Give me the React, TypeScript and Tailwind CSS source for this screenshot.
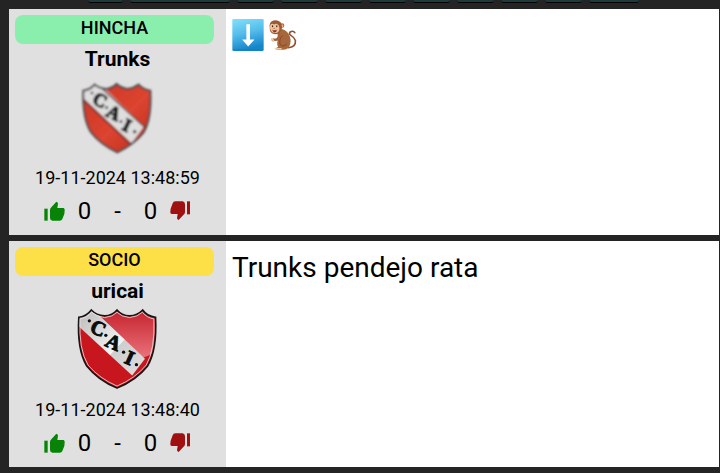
import React from "react";

type Post = {
  id: number;
  rank: string;
  rankClass: string;
  user: string;
  crest: React.ReactNode;
  date: string;
  body: React.ReactNode;
};

function SoftCrest() {
  return (
    <svg viewBox="55 21 240 240" className="h-20 w-20" role="img" aria-label="CAI">
      <defs>
        <linearGradient id="softRed" x1="0" y1="0" x2="1" y2="1">
          <stop offset="0" stopColor="#c93424" />
          <stop offset="0.55" stopColor="#dc4430" />
          <stop offset="1" stopColor="#b8281a" />
        </linearGradient>
        <clipPath id="softClip">
          <path d="M71 62 Q91 60 105 44 Q120 56 143 57 Q160 54 171 42 Q184 54 203 57 Q222 55 237 44 Q250 59 272 62 Q276 150 251 188 Q222 224 173 247 Q124 224 95 188 Q68 146 71 62Z" />
        </clipPath>
        <filter id="soften" x="-10%" y="-10%" width="120%" height="120%">
          <feGaussianBlur stdDeviation="2.5" />
        </filter>
      </defs>
      <g filter="url(#soften)">
        <g clipPath="url(#softClip)">
          <rect x="60" y="35" width="220" height="220" fill="url(#softRed)" />
          <path d="M60 40H118L253 169L216 220L62 76Z" fill="#dedede" />
          <path d="M118 47L255 172M66 84L212 222" stroke="#58302c" strokeWidth="4" fill="none" />
          <g fill="#161616" stroke="#161616" strokeWidth="4" fontFamily="Liberation Serif, serif" fontWeight="700" fontSize="56" textAnchor="middle">
            <text transform="translate(121 91) rotate(26)" y="18">C</text>
            <text transform="translate(162 129) rotate(26)" y="18">A</text>
            <text transform="translate(202 166) rotate(26)" y="18">I</text>
          </g>
          <g fill="#161616">
            <circle cx="97" cy="69" r="4" />
            <circle cx="141" cy="113" r="4" />
            <circle cx="184" cy="155" r="4" />
            <circle cx="225" cy="185" r="5" />
          </g>
        </g>
        <path d="M71 62 Q91 60 105 44 Q120 56 143 57 Q160 54 171 42 Q184 54 203 57 Q222 55 237 44 Q250 59 272 62 Q276 150 251 188 Q222 224 173 247 Q124 224 95 188 Q68 146 71 62Z" fill="none" stroke="#55494a" strokeWidth="6" />
      </g>
    </svg>
  );
}

function GlossCrest() {
  return (
    <svg viewBox="55 27 240 243" className="h-20 w-20 overflow-visible" role="img" aria-label="CAI">
      <defs>
        <linearGradient id="glossShine" x1="0" y1="0" x2="0" y2="1">
          <stop offset="0" stopColor="#c4202a" />
          <stop offset="1" stopColor="#ea727a" />
        </linearGradient>
        <linearGradient id="glossBand" gradientUnits="userSpaceOnUse" x1="60" y1="40" x2="230" y2="200">
          <stop offset="0" stopColor="#bdbdbd" />
          <stop offset="0.65" stopColor="#f4f4f4" />
          <stop offset="0.66" stopColor="#cfcfcf" />
          <stop offset="1" stopColor="#dadada" />
        </linearGradient>
        <clipPath id="glossClip">
          <path d="M56 52 Q80 49 94 30 Q109 46 134 48 Q158 47 172 30 Q186 47 210 48 Q234 47 250 30 Q263 49 289 52 Q294 150 265 200 Q230 244 172 267 Q115 244 80 200 Q50 150 56 52Z" />
        </clipPath>
      </defs>
      <g clipPath="url(#glossClip)">
        <rect x="50" y="25" width="245" height="245" fill="#c8161f" />
        <path d="M100 25H295V150Q275 169 250 175Z" fill="url(#glossShine)" />
        <path d="M50 25H96L257 178L218 229L50 75Z" fill="url(#glossBand)" />
      </g>
      <g fill="#0c0c0c" stroke="#0c0c0c" strokeWidth="3" fontFamily="Liberation Serif, serif" fontWeight="700" fontSize="62" textAnchor="middle">
        <text transform="translate(115 86) rotate(24)" y="20">C</text>
        <text transform="translate(161 129) rotate(24)" y="20">A</text>
        <text transform="translate(210 176) rotate(24)" y="20">I</text>
      </g>
      <g fill="#0c0c0c">
        <circle cx="88" cy="63" r="5" />
        <circle cx="138" cy="107" r="5" />
        <circle cx="192" cy="158" r="5" />
        <circle cx="231" cy="196" r="5" />
      </g>
      <path d="M56 52 Q80 49 94 30 Q109 46 134 48 Q158 47 172 30 Q186 47 210 48 Q234 47 250 30 Q263 49 289 52 Q294 150 265 200 Q230 244 172 267 Q115 244 80 200 Q50 150 56 52Z" fill="none" stroke="#161616" strokeWidth="5" />
      <path d="M60 57 Q82 54 95 37 Q111 51 134 53 Q159 51 172 37 Q186 51 210 53 Q234 51 249 37 Q263 54 284 57 Q288 150 261 197 Q227 238 172 261 Q118 238 84 197 Q55 150 60 57Z" fill="none" stroke="#f3dede" strokeWidth="2.5" />
    </svg>
  );
}

function ArrowDownEmoji() {
  return (
    <svg viewBox="0 0 96 98" className="h-8 w-8" role="img" aria-label="Down arrow">
      <defs>
        <linearGradient id="arrowBlue" x1="0" y1="0" x2="0.25" y2="1">
          <stop offset="0" stopColor="#82e0fa" />
          <stop offset="0.5" stopColor="#55bdeb" />
          <stop offset="1" stopColor="#1686cb" />
        </linearGradient>
      </defs>
      <rect width="96" height="98" rx="4" fill="url(#arrowBlue)" />
      <path d="M2 94H94" stroke="#1a75ae" strokeWidth="3" opacity="0.5" />
      <path d="M43 16H54V63H68L48.500 84L30 63H43Z" fill="#fff" />
    </svg>
  );
}

function MonkeyEmoji() {
  return (
    <svg viewBox="140 56 94 98" className="h-8 w-8" role="img" aria-label="Monkey">
      <path d="M203 144Q227 142 225 122Q221 112 212 107Q203 100 210 95Q219 91 223 98" fill="none" stroke="#8f5030" strokeWidth="5" strokeLinecap="round" />
      <path d="M171 87Q193 84 204 101Q215 120 207 139Q202 151 184 150H168Q163 145 172 142Q166 132 172 118Z" fill="#a8673a" />
      <path d="M186 107Q174 117 178 134Q188 144 199 132" fill="none" stroke="#7f482b" strokeWidth="3" />
      <path d="M173 98Q179 111 168 119L156 120" fill="none" stroke="#a3613a" strokeWidth="8" strokeLinecap="round" />
      <path d="M153 117L158 122M164 147H181" stroke="#efc9a2" strokeWidth="5" strokeLinecap="round" />
      <circle cx="184" cy="76" r="7" fill="#a8673a" />
      <circle cx="184" cy="77" r="4" fill="#edba91" />
      <path d="M146 75Q147 60 166 60Q184 62 184 81Q182 100 166 103Q150 102 147 91Z" fill="#9b5a34" />
      <path d="M148 74Q153 68 160 73Q168 67 174 76Q180 93 169 98Q157 102 150 92Q145 83 148 74Z" fill="#efc49a" />
      <ellipse cx="155" cy="78" rx="2" ry="3" fill="#3b2118" />
      <ellipse cx="168" cy="78" rx="2" ry="3" fill="#3b2118" />
      <path d="M154 89Q162 93 169 88Q167 97 161 97Q156 96 154 89Z" fill="#8d302b" />
      <path d="M158 85H162" stroke="#754630" strokeWidth="2" />
    </svg>
  );
}

function ThumbUp() {
  return (
    <svg viewBox="0 0 63 60" className="h-5 w-[21px]" fill="#078407" aria-hidden="true">
      <path d="M1 23H11V59H1Z" />
      <path d="M18 27Q18 22 22 19L37 2Q42 3 42 8L40 21H59Q63 23 62 29L61 39L55 54Q53 59 47 59H25Q18 58 18 51Z" />
    </svg>
  );
}

function ThumbDown() {
  return (
    <svg viewBox="0 0 63 60" className="h-5 w-[21px]" fill="#a01010" aria-hidden="true">
      <path d="M51 1H60V40H51Z" />
      <path d="M16 1H38Q45 3 45 10V33Q45 39 40 42L26 57Q21 56 21 51L23 39H4Q0 37 1 31L2 23L8 7Q10 1 16 1Z" />
    </svg>
  );
}

const posts: Post[] = [
  {
    id: 1,
    rank: "HINCHA",
    rankClass: "bg-[#8aefac]",
    user: "Trunks",
    crest: <SoftCrest />,
    date: "19-11-2024 13:48:59",
    body: (
      <span className="flex gap-[3px] pt-1">
        <ArrowDownEmoji />
        <MonkeyEmoji />
      </span>
    ),
  },
  {
    id: 2,
    rank: "SOCIO",
    rankClass: "bg-[#fde047]",
    user: "uricai",
    crest: <GlossCrest />,
    date: "19-11-2024 13:48:40",
    body: "Trunks pendejo rata",
  },
];

const pageTabs = [
  "w-[35px]",
  "w-[100px]",
  "w-[37px]",
  "w-[37px]",
  "w-[37px]",
  "w-[37px]",
  "w-[37px]",
  "w-[37px]",
  "w-[37px]",
  "w-[37px]",
  "w-[50px]",
];

function PostCard({ post }: { post: Post }) {
  return (
    <article className="flex bg-white">
      <aside className="flex w-[217px] shrink-0 flex-col items-center bg-[#e0e0e0] pt-1.5 pb-[5px]">
        <div className="w-full pr-3 pl-1.5">
          <div className={`rounded-lg pb-[3px] text-center text-[18px] leading-[26px] font-medium ${post.rankClass}`}>
            {post.rank}
          </div>
        </div>
        <h2 className="text-[21px] leading-[30px] font-bold">{post.user}</h2>
        <div className="pt-[3px]">{post.crest}</div>
        <time className="pt-[7px] text-[18px] leading-7">{post.date}</time>
        <div className="flex h-[38px] items-center gap-[23px] text-[24px]">
          <div className="flex items-center gap-[13px]">
            <button type="button" aria-label="Me gusta">
              <ThumbUp />
            </button>
            <span>0</span>
          </div>
          <span>-</span>
          <div className="flex items-center gap-[13px]">
            <span>0</span>
            <button type="button" aria-label="No me gusta">
              <ThumbDown />
            </button>
          </div>
        </div>
      </aside>
      <div className="min-w-0 flex-1 px-1.5 pt-1.5 text-[28px] leading-[42px]">{post.body}</div>
    </article>
  );
}

export default function App() {
  return (
    <div className="h-screen overflow-hidden bg-[#242424] pr-px pl-[9px] font-['Roboto',sans-serif] text-black">
      <nav aria-label="Páginas" className="flex h-[9px] gap-[7px] pl-[79px]">
        {pageTabs.map((width, i) => (
          <button
            key={i}
            type="button"
            aria-label={`Página ${i + 1}`}
            className={`h-[3px] shrink-0 rounded-b-md border-b border-black bg-[#1f3a3a] ${width}`}
          />
        ))}
      </nav>
      <main className="flex flex-col gap-1.5">
        {posts.map((post) => (
          <PostCard key={post.id} post={post} />
        ))}
        <div className="flex h-4 bg-white">
          <div className="w-[217px] bg-[#e0e0e0]" />
        </div>
      </main>
    </div>
  );
}
